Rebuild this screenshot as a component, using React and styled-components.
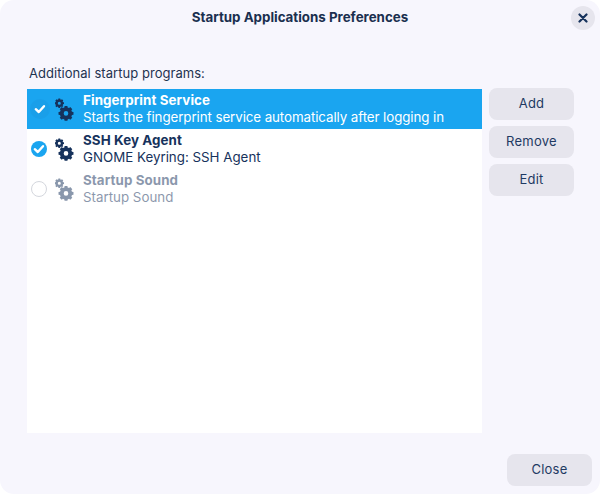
import React from 'react'
import styled, { createGlobalStyle } from 'styled-components'

const GlobalStyle = createGlobalStyle`
  html, body {
    margin: 0;
    background: #ffffff;
  }
  * {
    box-sizing: border-box;
  }
`

const Dialog = styled.div`
  width: 600px;
  height: 494px;
  display: flex;
  flex-direction: column;
  background: #f7f6fd;
  border-radius: 14px;
  font-family: Inter, 'Liberation Sans', sans-serif;
  color: #16325c;
  overflow: hidden;
`

const Header = styled.div`
  height: 36px;
  flex: none;
  display: flex;
  align-items: center;
  justify-content: flex-end;
  position: relative;
  padding: 0 5px 0 0;
`

const Title = styled.div`
  position: absolute;
  left: 0;
  right: 0;
  top: 9px;
  text-align: center;
  font-size: 13.33px;
  line-height: 16px;
  font-weight: 700;
  color: #1a2f4f;
`

const CloseRound = styled.button`
  width: 24px;
  height: 24px;
  border: 0;
  padding: 0;
  border-radius: 50%;
  background: #e6e5ed;
  display: flex;
  align-items: center;
  justify-content: center;
  color: #16325c;
`

const Body = styled.div`
  flex: 1;
  display: flex;
  flex-direction: column;
  padding: 29px 8px 8px 27px;
  min-height: 0;
`

const Label = styled.div`
  font-size: 13px;
  line-height: 16px;
  letter-spacing: 0.04px;
  padding-left: 2px;
  margin-bottom: 8px;
  color: #1f3350;
`

const Columns = styled.div`
  display: flex;
  gap: 7px;
  height: 344px;
`

const List = styled.div`
  width: 455px;
  background: #ffffff;
  display: flex;
  flex-direction: column;
`

const Row = styled.div`
  height: 40px;
  display: flex;
  align-items: center;
  padding-left: 4px;
  background: ${(p) => (p.$selected ? '#1aa5f0' : 'transparent')};
  opacity: ${(p) => (p.$dimmed ? 0.5 : 1)};
`

const Check = styled.span`
  width: 16px;
  height: 16px;
  flex: none;
  border-radius: 50%;
  display: flex;
  align-items: center;
  justify-content: center;
  background: ${(p) => (p.$on ? (p.$glow ? '#1a9fe9' : '#1aa5f0') : '#ffffff')};
  border: ${(p) => (p.$on ? '0' : '1px solid #aab0bd')};
  box-shadow: ${(p) => (p.$glow ? '0 0 0 2px #1a9fe9' : 'none')};
  transform: ${(p) => (p.$glow ? 'translateX(1px)' : 'none')};
`

const IconSlot = styled.span`
  width: 20px;
  height: 24px;
  margin-left: 8px;
  flex: none;
  display: flex;
`

const Texts = styled.div`
  margin-left: 8px;
  display: flex;
  flex-direction: column;
  font-size: 13.33px;
  line-height: 17px;
  color: ${(p) => (p.$selected ? '#ffffff' : '#16325c')};
`

const Name = styled.span`
  font-weight: 700;
  letter-spacing: 0.1px;
`

const Desc = styled.span`
  letter-spacing: ${(p) => (p.$long ? '-0.08px' : '0')};
`

const Buttons = styled.div`
  display: flex;
  flex-direction: column;
  gap: 6px;
  margin-top: -1px;
`

const PushButton = styled.button`
  width: 85px;
  height: 32px;
  border: 0;
  padding: 0 0 2px;
  border-radius: 8px;
  background: #e6e5ed;
  font-family: inherit;
  font-size: 13px;
  letter-spacing: 0.25px;
  color: #1f3a63;
`

const Footer = styled.div`
  display: flex;
  justify-content: flex-end;
  margin-top: 21px;
`

const gearPath = (cx, cy, outer, inner, hole, teeth) => {
  const pts = []
  const step = (Math.PI * 2) / teeth
  for (let i = 0; i < teeth; i++) {
    const a = i * step - Math.PI / 2
    const w = step * 0.24
    const w2 = step * 0.34
    pts.push([a - w2, inner], [a - w, outer], [a + w, outer], [a + w2, inner])
  }
  const ring = pts
    .map(([a, r], i) => `${i ? 'L' : 'M'}${(cx + Math.cos(a) * r).toFixed(2)} ${(cy + Math.sin(a) * r).toFixed(2)}`)
    .join(' ')
  return `${ring} Z M${cx - hole} ${cy} a${hole} ${hole} 0 1 0 ${hole * 2} 0 a${hole} ${hole} 0 1 0 ${-hole * 2} 0 Z`
}

const Gears = () => (
  <svg width="20" height="24" viewBox="0 0 20 24" fill="#16325c">
    <path fillRule="evenodd" d={gearPath(4.3, 6.2, 4.8, 3.9, 1.5, 8)} />
    <path fillRule="evenodd" d={gearPath(11, 16.4, 7.6, 6.2, 2.3, 8)} />
  </svg>
)

const Tick = ({ color }) => (
  <svg width="12" height="12" viewBox="0 0 12 12" fill="none">
    <path d="M1.8 6.2 L4.8 9 L10 3.2" stroke={color} strokeWidth="2.4" strokeLinecap="round" strokeLinejoin="round" />
  </svg>
)

const programs = [
  { name: 'Fingerprint Service', desc: 'Starts the fingerprint service automatically after logging in', on: true, selected: true, long: true },
  { name: 'SSH Key Agent', desc: 'GNOME Keyring: SSH Agent', on: true },
  { name: 'Startup Sound', desc: 'Startup Sound', on: false, dimmed: true },
]

const App = () => {
  return (
    <Dialog>
      <GlobalStyle />
      <Header>
        <Title>Startup Applications Preferences</Title>
        <CloseRound>
          <svg width="10" height="10" viewBox="0 0 10 10">
            <path d="M1.5 1.5 L8.5 8.5 M8.5 1.5 L1.5 8.5" stroke="#16325c" strokeWidth="2.2" strokeLinecap="round" />
          </svg>
        </CloseRound>
      </Header>
      <Body>
        <Label>Additional startup programs:</Label>
        <Columns>
          <List>
            {programs.map((p) => (
              <Row key={p.name} $selected={p.selected} $dimmed={p.dimmed}>
                <Check $on={p.on} $glow={p.selected}>
                  {p.on && <Tick color="#ffffff" />}
                </Check>
                <IconSlot>
                  <Gears />
                </IconSlot>
                <Texts $selected={p.selected}>
                  <Name>{p.name}</Name>
                  <Desc $long={p.long}>{p.desc}</Desc>
                </Texts>
              </Row>
            ))}
          </List>
          <Buttons>
            <PushButton>Add</PushButton>
            <PushButton>Remove</PushButton>
            <PushButton>Edit</PushButton>
          </Buttons>
        </Columns>
        <Footer>
          <PushButton>Close</PushButton>
        </Footer>
      </Body>
    </Dialog>
  )
}

export default App
